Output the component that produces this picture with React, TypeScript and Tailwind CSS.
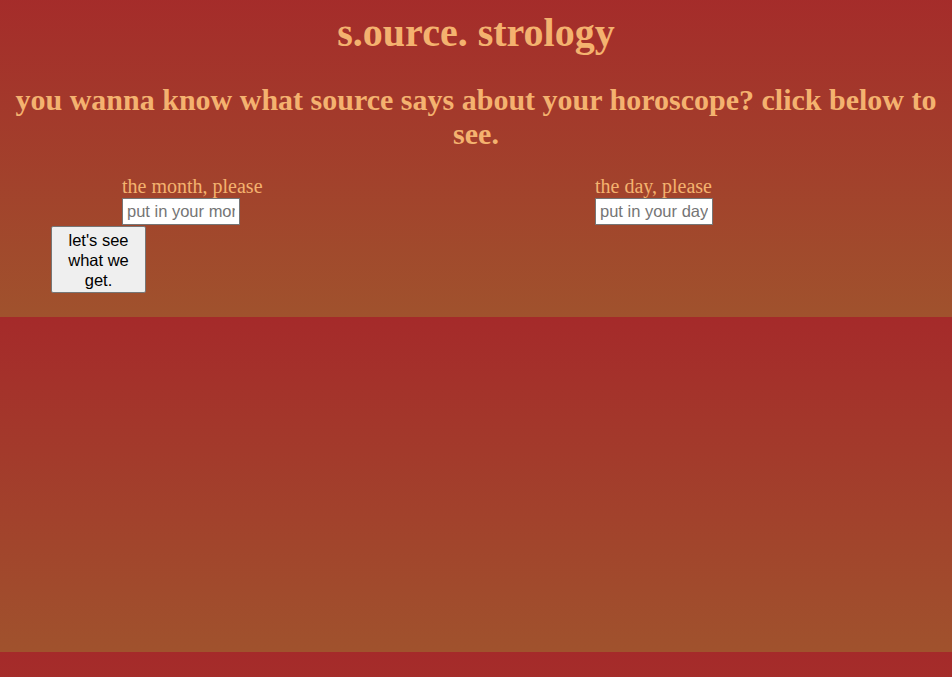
export default function App() {
  return (
    <div className="min-h-screen w-full bg-[linear-gradient(#a52a2a,#a0522d)] bg-[length:100%_335px] bg-[position:0_-18px] bg-repeat font-['Liberation_Serif',serif] text-[#f4b26f]">
      <h1 className="pt-[10px] text-center text-[40px] font-bold leading-[46px]">s.ource. strology</h1>
      <h2 className="mt-[27px] px-[10px] text-center text-[30px] font-bold leading-[34px]">
        you wanna know what source says about your horoscope? click below to see.
      </h2>
      <div className="mt-[24px] flex">
        <div className="flex w-1/2 flex-col items-start pl-[122px]">
          <label className="text-[20px] leading-[23px]">the month, please</label>
          <input
            placeholder="put in your month"
            className="h-[27px] w-[118px] border border-[#767676] bg-white px-[4px] font-['Liberation_Sans',sans-serif] text-[16.5px] text-black placeholder:text-[#757575]"
          />
        </div>
        <div className="flex w-1/2 flex-col items-start pl-[119px]">
          <label className="text-[20px] leading-[23px]">the day, please</label>
          <input
            placeholder="put in your day"
            className="h-[27px] w-[118px] border border-[#767676] bg-white px-[4px] font-['Liberation_Sans',sans-serif] text-[16.5px] text-black placeholder:text-[#757575]"
          />
        </div>
      </div>
      <div className="mt-[1px] pl-[51px]">
        <button className="h-[67px] w-[95px] rounded-[2px] border border-[#767676] bg-[#efefef] px-[6px] font-['Liberation_Sans',sans-serif] text-[16.5px] leading-[20px] text-black">
          let's see what we get.
        </button>
      </div>
    </div>
  );
}
